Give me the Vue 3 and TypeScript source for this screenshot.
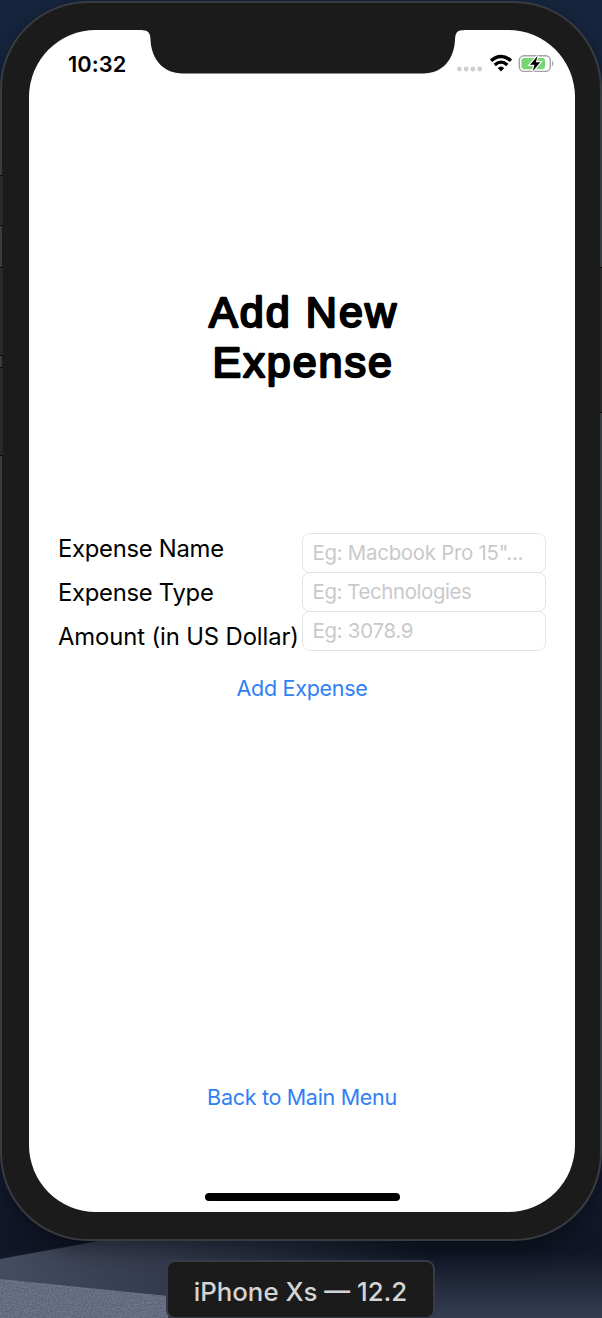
<script setup lang="ts">
interface Field {
  id: string
  label: string
  hint: string
}

const fields: Field[] = [
  { id: 'name', label: 'Expense Name', hint: 'Eg: Macbook Pro 15"...' },
  { id: 'type', label: 'Expense Type', hint: 'Eg: Technologies' },
  { id: 'amount', label: 'Amount (in US Dollar)', hint: 'Eg: 3078.9' },
]
</script>

<template>
  <main class="desktop">
    <svg class="wallpaper" viewBox="0 0 602 1318" aria-hidden="true">
      <defs>
        <linearGradient id="sky" x1="0" y1="0" x2="0" y2="1">
          <stop offset="0" stop-color="#17263f" />
          <stop offset="0.9" stop-color="#141b2f" />
          <stop offset="0.95" stop-color="#101626" />
          <stop offset="1" stop-color="#363e52" />
        </linearGradient>
        <linearGradient id="dune" x1="0" y1="0" x2="1" y2="0">
          <stop offset="0" stop-color="#454c60" />
          <stop offset="0.4" stop-color="#343a4d" />
          <stop offset="1" stop-color="#343a4d" stop-opacity="0" />
        </linearGradient>
        <filter id="grain" x="0" y="0" width="100%" height="100%">
          <feTurbulence type="fractalNoise" baseFrequency="0.7" numOctaves="2" result="n" />
          <feColorMatrix in="n" type="matrix" values="0 0 0 0 0.7  0 0 0 0 0.75  0 0 0 0 0.9  0.25 0 0 0 -0.06" result="g" />
          <feComposite in="g" in2="SourceGraphic" operator="in" result="c" />
          <feMerge><feMergeNode in="SourceGraphic" /><feMergeNode in="c" /></feMerge>
        </filter>
      </defs>
      <rect width="602" height="1318" fill="url(#sky)" />
      <path d="M0 1259L110 1239H430V1318H0Z" fill="url(#dune)" />
      <path d="M0 1279L168 1296V1318H0Z" fill="#585f75" filter="url(#grain)" />
    </svg>

    <section class="phone">
      <i class="key mute"></i>
      <i class="key up"></i>
      <i class="key down"></i>
      <i class="key power"></i>
      <div class="screen">
        <svg class="notch" viewBox="0 0 322 44" aria-hidden="true">
          <path d="M0 0H322V.3H320Q313 .5 313 9C312.500 29 301 43.500 281 43.500H41C21 43.500 9 29 8.500 9Q8.500 .5 1 .3H0Z" fill="#1b1b1b" />
        </svg>
        <header class="status">
          <time>10:32</time>
          <svg class="indicators" width="98" height="22" viewBox="0 0 98 22" aria-hidden="true">
            <g fill="#cfcfcf">
              <circle cx="3.300" cy="16" r="2.400" />
              <circle cx="10.100" cy="16" r="2.400" />
              <circle cx="16.900" cy="16" r="2.400" />
              <circle cx="23.700" cy="16" r="2.400" />
            </g>
            <path d="M35.100 7.700C41 2 49 2 54.900 7.700" fill="none" stroke="#000" stroke-width="3.500" />
            <path d="M38.700 11.900Q45 6.300 51.300 11.900" fill="none" stroke="#000" stroke-width="3.300" />
            <path d="M41.700 15Q45 12 48.300 15L45 18.400Z" fill="#000" />
            <rect x="63.300" y="2.800" width="31" height="15.600" rx="4.600" fill="none" stroke="#a3a3a3" stroke-width="1.400" />
            <path d="M96 7.600Q98.600 10.500 96 13.400Z" fill="#a3a3a3" />
            <rect x="65.500" y="5" width="23.500" height="11.200" rx="2.400" fill="#78d572" />
            <path d="M81.500 3L74 11.700H78.400L76.800 18.200L84.200 9.200H79.900Z" fill="#000" stroke="#fff" stroke-width="2.400" paint-order="stroke" />
          </svg>
        </header>

        <h1 class="title">
          <svg width="200" height="104" viewBox="0 0 200 104">
            <text x="7" y="36" textLength="187" lengthAdjust="spacing">Add New</text>
            <text x="10.500" y="86.300" textLength="179.500" lengthAdjust="spacing">Expense</text>
          </svg>
        </h1>

        <form class="form" @submit.prevent>
          <div class="labels">
            <label v-for="f in fields" :key="f.id" :for="f.id" :class="f.id">{{ f.label }}</label>
          </div>
          <div class="inputs">
            <input v-for="f in fields" :id="f.id" :key="f.id" type="text" :placeholder="f.hint" />
          </div>
          <button class="link add" type="submit">Add Expense</button>
        </form>

        <button class="link back" type="button">Back to Main Menu</button>
        <div class="home"></div>
      </div>
    </section>

    <footer class="caption"><span>iPhone Xs — 12.2</span></footer>
  </main>
</template>

<style>
html,
body {
  margin: 0;
  background: #141b2f;
  overflow: hidden;
}
</style>

<style scoped>
.desktop {
  position: relative;
  box-sizing: border-box;
  width: 602px;
  height: 1318px;
  padding-top: 1px;
  overflow: hidden;
  font-family: Inter, "Liberation Sans", sans-serif;
}
.wallpaper {
  position: absolute;
  inset: 0;
  width: 602px;
  height: 1318px;
}
.phone {
  position: relative;
  box-sizing: border-box;
  width: 602px;
  height: 1240px;
  padding: 27px 25px 26px 27px;
  border: 2px solid #383b40;
  border-radius: 88px;
  background: #1b1b1b;
  box-shadow: 0 8px 24px rgba(0, 0, 0, 0.45);
}
.key {
  position: absolute;
  box-sizing: border-box;
  left: -2px;
  width: 3px;
  background: #292929;
  border: solid #090b0f;
  border-width: 1px 0;
}
.mute { top: 172px; height: 51px; }
.up { top: 264px; height: 89px; }
.down { top: 364px; height: 89px; }
.power { left: auto; right: -2px; top: 264px; height: 146px; width: 2px; }
.screen {
  position: relative;
  display: flex;
  flex-direction: column;
  align-items: center;
  width: 546px;
  height: 1182px;
  border-radius: 67px;
  background: #fff;
}
.notch {
  position: absolute;
  top: 0;
  left: 113px;
  width: 322px;
  height: 44px;
}
.status {
  display: flex;
  justify-content: space-between;
  align-items: flex-start;
  box-sizing: border-box;
  width: 100%;
  height: 60px;
  padding: 22px 21px 0 39px;
}
.status time {
  font-size: 21.800px;
  font-weight: 600;
  line-height: 24px;
  letter-spacing: 0.100px;
}
.indicators {
  margin-top: 1px;
}
.title {
  width: 200px;
  height: 104px;
  margin: 201px 0 0;
}
.title svg {
  display: block;
  overflow: visible;
}
.title text {
  font: 400 43px "Liberation Sans", Arial, sans-serif;
  fill: #000;
  stroke: #000;
  stroke-width: 2.300px;
  stroke-linejoin: round;
}
.form {
  display: grid;
  grid-template-columns: 244px 244px;
  width: 488px;
  margin-top: 138px;
}
.labels {
  display: flex;
  flex-direction: column;
}
label {
  height: 44px;
  line-height: 32px;
  font-size: 23.800px;
  letter-spacing: -0.260px;
  white-space: nowrap;
  color: #000;
}
.amount {
  letter-spacing: -0.100px;
}
.inputs {
  display: flex;
  flex-direction: column;
}
input {
  box-sizing: border-box;
  width: 244px;
  height: 40px;
  margin: 0 0 -0.900px;
  padding: 0 9px 0.500px 9.500px;
  border: 1px solid #e3e3e3;
  border-radius: 8px;
  background: transparent;
  font: 400 20.400px Inter, sans-serif;
  letter-spacing: -0.250px;
  outline: none;
}
#type {
  letter-spacing: -0.380px;
}
input::placeholder {
  color: #c9c9cc;
  opacity: 1;
}
.link {
  padding: 0;
  border: 0;
  background: none;
  font: 400 21.500px/28px Inter, sans-serif;
  letter-spacing: -0.300px;
  color: #2f80f7;
  white-space: nowrap;
}
.add {
  grid-column: 1 / 3;
  justify-self: center;
  margin-top: 9px;
}
.back {
  margin-top: auto;
  margin-bottom: 82px;
}
.home {
  width: 195px;
  height: 7.500px;
  margin-bottom: 11.500px;
  border-radius: 4px;
  background: #000;
}
.caption {
  position: relative;
  display: flex;
  align-items: center;
  justify-content: center;
  box-sizing: border-box;
  width: 269px;
  height: 59px;
  margin: 19px 0 0 166px;
  padding-top: 4px;
  border: 2px solid #363b48;
  border-radius: 9px;
  background: #1b1b1b;
  color: #d4d4d4;
  font-size: 25.800px;
  font-weight: 500;
  white-space: nowrap;
}
</style>
